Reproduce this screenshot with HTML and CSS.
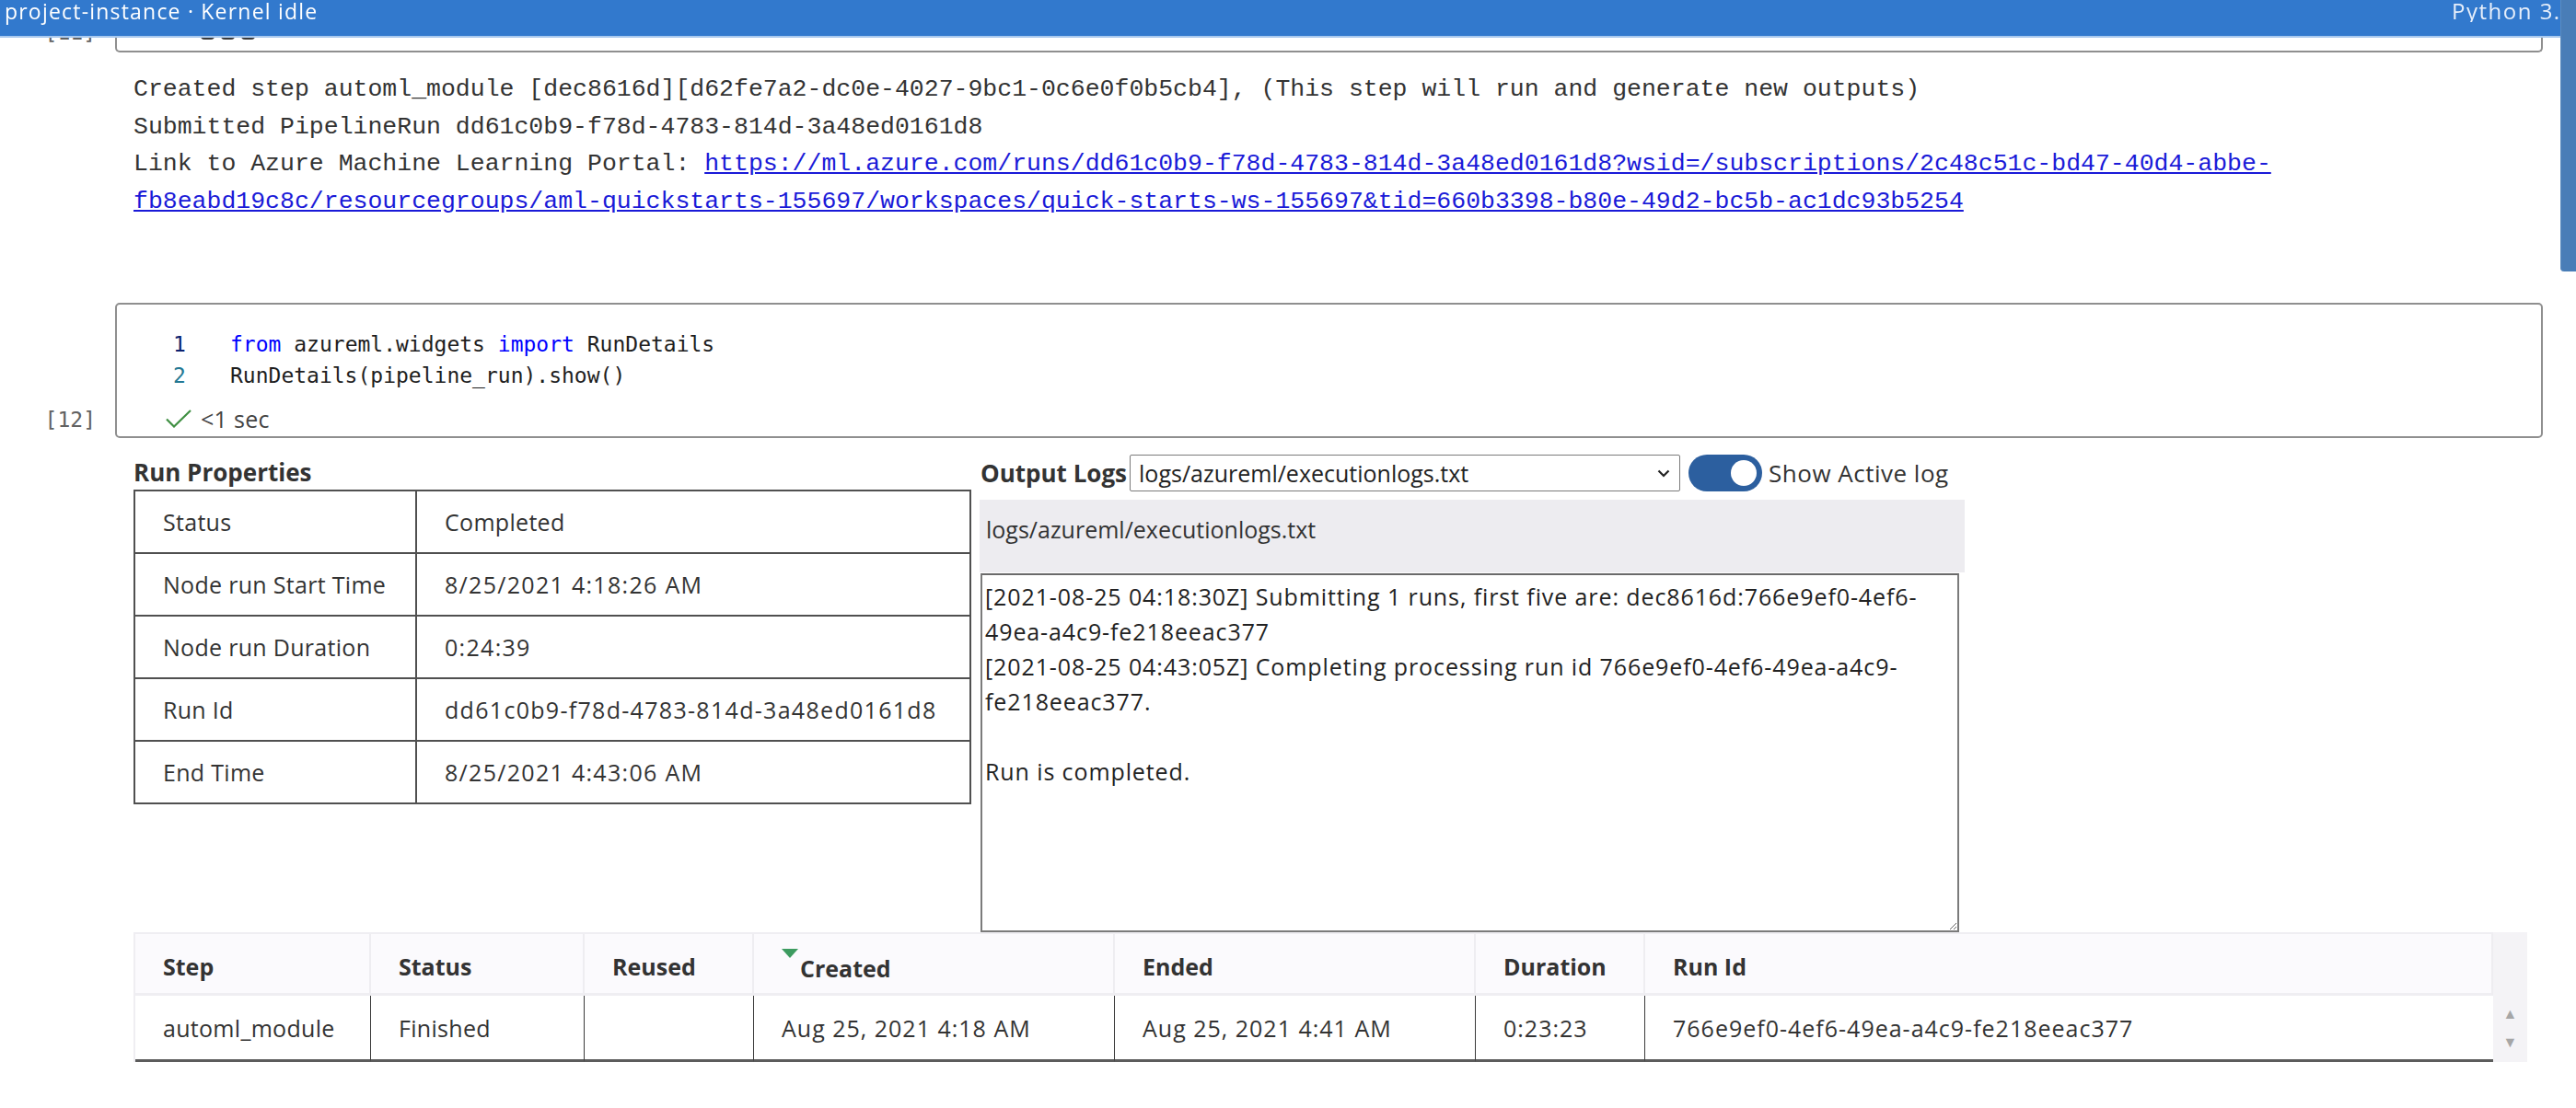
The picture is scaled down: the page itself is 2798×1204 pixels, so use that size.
FILE: index.html
```html
<!DOCTYPE html>
<html lang="en">
<head>
<meta charset="utf-8">
<title>project-instance · Kernel idle</title>
<link rel="stylesheet" href="styles.css">
</head>
<body>
<header class="topbar">
  <span class="kernel">project-instance · Kernel idle</span>
  <span class="env">Python 3.8 - AzureML</span>
</header>
<div class="vscroll"></div>

<main class="notebook">
  <section class="cell cell-prev">
    <div class="prompt prompt-prev">[11]</div>
    <div class="cell-box prev-box">
      <span class="dots"><i></i><i></i><i></i></span>
    </div>
  </section>

  <div class="output-text"><div>Created step automl_module [dec8616d][d62fe7a2-dc0e-4027-9bc1-0c6e0f0b5cb4], (This step will run and generate new outputs)</div><div>Submitted PipelineRun dd61c0b9-f78d-4783-814d-3a48ed0161d8</div><div>Link to Azure Machine Learning Portal: <a href="#">https://ml.azure.com/runs/dd61c0b9-f78d-4783-814d-3a48ed0161d8?wsid=/subscriptions/2c48c51c-bd47-40d4-abbe-<br>fb8eabd19c8c/resourcegroups/aml-quickstarts-155697/workspaces/quick-starts-ws-155697&amp;tid=660b3398-b80e-49d2-bc5b-ac1dc93b5254</a></div></div>

  <section class="cell cell-code">
    <div class="prompt prompt-code">[12]</div>
    <div class="cell-box code-box">
      <div class="code-line"><span class="ln ln-active">1</span><span class="code"><span class="kw">from</span> azureml.widgets <span class="kw">import</span> RunDetails</span></div>
      <div class="code-line"><span class="ln">2</span><span class="code">RunDetails(pipeline_run).show()</span></div>
      <div class="exec-status">
        <svg class="check" width="28" height="20" viewBox="0 0 28 20"><path d="M1 10.5 L9 18.5 L27 1" fill="none" stroke="#3f8f42" stroke-width="2.2"/></svg>
        <span>&lt;1 sec</span>
      </div>
    </div>
  </section>

  <section class="widget">
    <div class="widget-top">
      <div class="run-props">
        <div class="widget-title">Run Properties</div>
        <table class="props-table">
          <colgroup><col class="c-key"><col class="c-val"></colgroup>
          <tr><td>Status</td><td class="val">Completed</td></tr>
          <tr><td>Node run Start Time</td><td class="val num">8/25/2021 4:18:26 AM</td></tr>
          <tr><td>Node run Duration</td><td class="val num">0:24:39</td></tr>
          <tr><td>Run Id</td><td class="val num">dd61c0b9-f78d-4783-814d-3a48ed0161d8</td></tr>
          <tr><td>End Time</td><td class="val num">8/25/2021 4:43:06 AM</td></tr>
        </table>
      </div>
      <div class="logs">
        <div class="logs-bar">
          <span class="logs-label">Output Logs</span>
          <div class="select">
            <span>logs/azureml/executionlogs.txt</span>
            <svg width="14" height="9" viewBox="0 0 14 9"><path d="M1.5 1.5 L7 7 L12.5 1.5" fill="none" stroke="#222" stroke-width="2.2"/></svg>
          </div>
          <div class="toggle"><span class="knob"></span></div>
          <span class="toggle-label">Show Active log</span>
        </div>
        <div class="log-path">logs/azureml/executionlogs.txt</div>
        <textarea class="log-body" wrap="off" readonly>[2021-08-25 04:18:30Z] Submitting 1 runs, first five are: dec8616d:766e9ef0-4ef6-
49ea-a4c9-fe218eeac377
[2021-08-25 04:43:05Z] Completing processing run id 766e9ef0-4ef6-49ea-a4c9-
fe218eeac377.

Run is completed.</textarea>
      </div>
    </div>

    <div class="steps">
      <table class="steps-table">
        <colgroup>
          <col class="w-step"><col class="w-status"><col class="w-reused"><col class="w-created"><col class="w-ended"><col class="w-duration"><col class="w-runid">
        </colgroup>
        <thead>
          <tr><th>Step</th><th>Status</th><th>Reused</th><th><span class="sort-arrow"></span>Created</th><th>Ended</th><th>Duration</th><th>Run Id</th></tr>
        </thead>
        <tbody>
          <tr><td>automl_module</td><td>Finished</td><td></td><td class="num">Aug 25, 2021 4:18 AM</td><td class="num">Aug 25, 2021 4:41 AM</td><td class="num">0:23:23</td><td class="num">766e9ef0-4ef6-49ea-a4c9-fe218eeac377</td></tr>
        </tbody>
      </table>
      <div class="steps-scroll"><span>&#9650;</span><span>&#9660;</span></div>
    </div>
  </section>
</main>
</body>
</html>
```

FILE: styles.css
```css
html, body {
  margin: 0;
  padding: 0;
}
body {
  width: 2798px;
  height: 1204px;
  overflow: hidden;
  background: #ffffff;
  font-family: "Open Sans", "Noto Sans", sans-serif;
  color: #333333;
}

/* ---------- top bar ---------- */
.topbar {
  position: fixed;
  top: 0;
  left: 0;
  right: 0;
  height: 41px;
  box-sizing: border-box;
  background: #3279cd;
  border-bottom: 2px solid #a9c9ee;
  display: flex;
  align-items: flex-start;
  padding-left: 5px;
  color: #ffffff;
  font-size: 23px;
  letter-spacing: 1.2px;
  line-height: 24px;
  z-index: 2;
}
.kernel {
  flex: 1;
  white-space: nowrap;
}
.env {
  width: 135px;
  flex: none;
  overflow: hidden;
  white-space: nowrap;
  font-size: 24px;
  letter-spacing: 1.5px;
  color: #e6eefa;
}
.vscroll {
  position: fixed;
  top: 0;
  right: 0;
  width: 16px;
  height: 295px;
  background: #497db7;
  border-left: 1px solid #5d8cc0;
  border-radius: 0 0 0 4px;
  z-index: 3;
}

/* ---------- cells ---------- */
.cell {
  display: flex;
  align-items: flex-end;
}
.prompt {
  width: 125px;
  flex: none;
  box-sizing: border-box;
  padding-right: 21px;
  text-align: right;
  font-family: "DejaVu Sans Mono", monospace;
  font-size: 23px;
  line-height: 27px;
  color: #616161;
}
.prompt-prev {
  padding-bottom: 8px;
}
.prompt-code {
  padding-bottom: 6px;
}
.cell-box {
  flex: 1;
  margin-right: 36px;
  box-sizing: border-box;
  border: 2px solid #8f8f8f;
  border-radius: 5px;
}
.prev-box {
  height: 57px;
  border-top: none;
  border-radius: 0 0 5px 5px;
  display: flex;
  align-items: flex-end;
  padding: 0 0 12px 91px;
}
.dots {
  display: flex;
  gap: 7px;
}
.dots i {
  display: block;
  width: 15px;
  height: 8px;
  border-radius: 4px;
  background: #3a3a3a;
}

.output-text {
  margin: 20px 36px 0 145px;
  font-family: "Liberation Mono", monospace;
  font-size: 26.5px;
  line-height: 40.5px;
  color: #333333;
  white-space: pre;
}
.output-text a {
  color: #1a1ad8;
}

.cell-code {
  margin-top: 90px;
}
.code-box {
  padding: 26px 0 4px 0;
}
.code-line {
  display: flex;
  font-family: "DejaVu Sans Mono", monospace;
  font-size: 23px;
  line-height: 34px;
  color: #1e1e1e;
  white-space: pre;
}
.ln {
  width: 62px;
  padding-left: 61px;
  flex: none;
  color: #237893;
}
.ln-active {
  color: #0b216f;
}
.kw {
  color: #0000ff;
}
.exec-status {
  margin-top: 15px;
  height: 30px;
  display: flex;
  align-items: center;
  gap: 10px;
  padding-left: 53px;
  font-size: 25px;
  letter-spacing: 0.3px;
  color: #444444;
}

/* ---------- widget ---------- */
.widget {
  margin: 18px 0 0 145px;
}
.widget-top {
  display: flex;
  align-items: flex-start;
}
.run-props {
  width: 908px;
  flex: none;
}
.widget-title {
  font-weight: 700;
  font-size: 26px;
  line-height: 38px;
  color: #333333;
}
.props-table {
  width: 908px;
  border-collapse: collapse;
  table-layout: fixed;
}
.c-key { width: 306px; }
.c-val { width: 602px; }
.props-table td {
  height: 66px;
  padding: 0 0 0 30px;
  border: 2px solid #505050;
  font-size: 25px;
  letter-spacing: 0.3px;
  color: #333333;
  white-space: nowrap;
}
.props-table td.num {
  letter-spacing: 1.3px;
}

.logs {
  margin-left: 11px;
  width: 1070px;
  flex: none;
}
.logs-bar {
  display: flex;
  align-items: center;
  height: 40px;
  padding-left: 1px;
}
.logs-label {
  font-weight: 700;
  font-size: 26px;
  color: #333333;
}
.select {
  margin-left: 3px;
  width: 598px;
  height: 40px;
  box-sizing: border-box;
  border: 1px solid #7a7a7a;
  border-radius: 2px;
  display: flex;
  align-items: center;
  justify-content: space-between;
  padding: 0 10px 0 9px;
  font-size: 25px;
  color: #222222;
}
.toggle {
  margin-left: 9px;
  width: 80px;
  height: 40px;
  box-sizing: border-box;
  border-radius: 20px;
  background: #2c5f9f;
  display: flex;
  align-items: center;
  justify-content: flex-end;
  padding-right: 6px;
}
.knob {
  width: 28px;
  height: 28px;
  border-radius: 50%;
  background: #ffffff;
}
.toggle-label {
  margin-left: 7px;
  font-size: 26px;
  letter-spacing: 0.5px;
  color: #333333;
}
.log-path {
  margin-top: 9px;
  height: 79px;
  box-sizing: border-box;
  background: #edecf0;
  padding: 15px 0 0 7px;
  font-size: 25px;
  line-height: 34px;
  color: #333333;
}
.log-body {
  display: block;
  margin: 1px 0 0 1px;
  width: 1063px;
  height: 390px;
  box-sizing: border-box;
  border: 2px solid #7b7b7b;
  border-top-color: #6a6a6a;
  padding: 4px 3px;
  font-family: "Open Sans", "Noto Sans", sans-serif;
  font-size: 25px;
  letter-spacing: 0.9px;
  line-height: 38px;
  color: #222222;
  background: #ffffff;
  resize: both;
  overflow: hidden;
  white-space: pre;
}

/* ---------- steps table ---------- */
.steps {
  display: flex;
  width: 2598px;
}
.steps-table {
  width: 2561px;
  flex: none;
  border-collapse: separate;
  border-spacing: 0;
  table-layout: fixed;
  border-top: 2px solid #efeef2;
  border-left: 2px solid #efeef2;
}
.w-step { width: 256px; }
.w-status { width: 232px; }
.w-reused { width: 184px; }
.w-created { width: 392px; }
.w-ended { width: 392px; }
.w-duration { width: 184px; }
.w-runid { width: 921px; }
.steps-table th,
.steps-table td {
  box-sizing: border-box;
  padding: 0 0 0 30px;
  text-align: left;
  font-size: 25px;
  color: #333333;
  white-space: nowrap;
}
.steps-table th {
  height: 67px;
  background: #fbfafd;
  border-right: 2px solid #eeedf1;
  border-bottom: 3px solid #efeef2;
  font-weight: 700;
  padding-top: 6px;
}
.steps-table td {
  height: 71px;
  border-right: 1px solid #3a3a3a;
  border-bottom: 3px solid #5c5c5c;
  letter-spacing: 0.3px;
}
.steps-table td.num {
  letter-spacing: 1px;
}
.steps-table td:last-child {
  border-right: none;
}
.sort-arrow {
  display: inline-block;
  width: 0;
  height: 0;
  border-left: 9px solid transparent;
  border-right: 9px solid transparent;
  border-top: 10px solid #3d9b60;
  vertical-align: 21px;
  margin-right: 2px;
}
.steps-scroll {
  width: 37px;
  height: 141px;
  flex: none;
  box-sizing: border-box;
  background: #f4f3f6;
  display: flex;
  flex-direction: column;
  justify-content: flex-end;
  align-items: center;
  padding-bottom: 6px;
  font-size: 16px;
  line-height: 31px;
  color: #a6a6a6;
}
```
